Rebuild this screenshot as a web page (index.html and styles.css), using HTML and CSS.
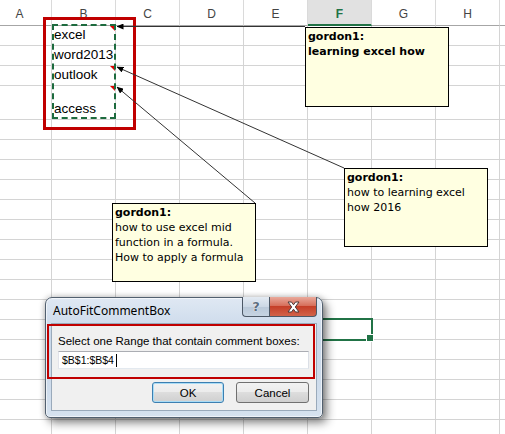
FILE: index.html
```html
<!DOCTYPE html>
<html lang="en">
<head>
    <meta charset="UTF-8">
    <title>AutoFitCommentBox</title>
    <link rel="stylesheet" href="styles.css">
</head>
<body>
    <div class="page">
        <!-- worksheet grid, filled in by the script below -->
        <div class="sheet" id="sheet"></div>

        <!-- marks drawn over the sheet -->
        <div class="marquee"></div>
        <div class="mark mark-range"></div>
        <div class="selection"></div>

        <svg class="arrows" width="505" height="434" viewBox="0 0 505 434">
            <defs>
                <marker id="head" markerWidth="7" markerHeight="6" refX="6.5" refY="3" orient="auto" markerUnits="userSpaceOnUse">
                    <path d="M0,0 L7,3 L0,6 z" fill="#000"/>
                </marker>
            </defs>
            <line x1="305" y1="26.5" x2="117" y2="26.5" stroke="#333" marker-end="url(#head)"/>
            <line x1="344" y1="168" x2="117" y2="67" stroke="#333" marker-end="url(#head)"/>
            <line x1="255" y1="203" x2="117" y2="87" stroke="#333" marker-end="url(#head)"/>
        </svg>

        <div class="note note-1">
            <b>gordon1:</b><br>
            <b>learning excel how</b>
        </div>
        <div class="note note-2">
            <b>gordon1:</b><br>
            how to learning excel<br>
            how 2016
        </div>
        <div class="note note-3">
            <b>gordon1:</b><br>
            how to use excel mid<br>
            function in a formula.<br>
            How to apply a formula
        </div>

        <!-- the add-in dialog -->
        <div class="dialog">
            <div class="title-bar">
                <span class="title">AutoFitCommentBox</span>
                <div class="caption-buttons">
                    <span class="cap-btn help">?</span>
                    <span class="cap-btn close">
                        <svg width="13" height="12" viewBox="0 0 13 12">
                            <path d="M1,1 H4.5 L6.5,3.8 L8.5,1 H12 L8.3,6 L12,11 H8.5 L6.5,8.2 L4.5,11 H1 L4.7,6 Z" fill="#fff" stroke="#4a3a3a" stroke-width="1" stroke-linejoin="round"/>
                        </svg>
                    </span>
                </div>
            </div>
            <div class="client">
                <div class="prompt">Select one Range that contain comment boxes:</div>
                <div class="field">$B$1:$B$4<span class="caret"></span></div>
                <div class="actions">
                    <button class="btn default">OK</button>
                    <button class="btn">Cancel</button>
                </div>
            </div>
        </div>
        <div class="mark mark-form"></div>
    </div>

    <script>
        const sheet = document.getElementById('sheet');
        // last column is only a sliver at the window edge, so no letter
        const cols = ['A', 'B', 'C', 'D', 'E', 'F', 'G', 'H', ''];
        const values = { 1: 'excel', 2: 'word2013', 3: 'outlook', 4: 'access' };
        const noted = [1, 3, 4];

        cols.forEach(c => {
            const h = document.createElement('div');
            h.className = c === 'F' ? 'hdr active' : 'hdr';
            h.textContent = c;
            sheet.appendChild(h);
        });

        for (let r = 1; r <= 20; r++) {
            cols.forEach(c => {
                const cell = document.createElement('div');
                cell.className = 'cell';
                if (c === 'B' && values[r]) {
                    cell.textContent = values[r];
                    if (noted.includes(r)) cell.classList.add('noted');
                }
                sheet.appendChild(cell);
            });
        }
    </script>
</body>
</html>
```

FILE: styles.css
```css
* {
    box-sizing: border-box;
}

body {
    margin: 0;
    background: #fff;
    font-family: 'Liberation Sans', Arial, sans-serif;
}

.page {
    position: relative;
    width: 505px;
    height: 434px;
    overflow: hidden;
}

/* Sheet */
.sheet {
    display: grid;
    grid-template-columns: repeat(9, 64px);
    grid-template-rows: 26px 20px 20px 20px 34px;
    grid-auto-rows: 20px;
    margin-left: -12px;
}

.hdr {
    border-right: 1px solid #dadada;
    border-bottom: 1px solid #a6a6a6;
    padding-top: 4px;
    line-height: 21px;
    text-align: center;
    font-size: 12px;
    color: #444;
}

.hdr.active {
    background: #e1e1e1;
    border-bottom: 2px solid #217346;
    color: #217346;
    font-weight: bold;
}

.cell {
    position: relative;
    display: flex;
    align-items: flex-end;
    padding: 0 2px 2px;
    border-right: 1px solid #d4d4d4;
    border-bottom: 1px solid #d4d4d4;
    font-size: 13.5px;
    line-height: 16px;
    color: #000;
    white-space: nowrap;
}

/* red comment indicator */
.cell.noted::after {
    content: '';
    position: absolute;
    top: 0;
    right: 0;
    border-top: 5px solid #e00000;
    border-left: 5px solid transparent;
}

.marquee {
    position: absolute;
    left: 52px;
    top: 24px;
    width: 64px;
    height: 95px;
    border: 2px dashed #1d6b3e;
}

.mark {
    position: absolute;
    border: 3px solid #c00000;
}

.mark-range {
    left: 43px;
    top: 17px;
    width: 93px;
    height: 113px;
}

.mark-form {
    left: 47px;
    top: 324px;
    width: 268px;
    height: 55px;
    border-width: 2px;
}

.selection {
    position: absolute;
    left: 306px;
    top: 318px;
    width: 67px;
    height: 23px;
    border: 2px solid #217346;
}

.selection::after {
    content: '';
    position: absolute;
    right: -3px;
    bottom: -3px;
    width: 6px;
    height: 6px;
    background: #217346;
    border: 1px solid #fff;
}

.arrows {
    position: absolute;
    left: 0;
    top: 0;
}

/* Comment boxes */
.note {
    position: absolute;
    width: 144px;
    height: 80px;
    padding: 1px 2px 0;
    background: #ffffe1;
    border: 1px solid #000;
    font-family: 'DejaVu Sans', Tahoma, sans-serif;
    font-size: 11px;
    line-height: 15px;
    color: #000;
    white-space: nowrap;
}

.note-1 {
    left: 305px;
    top: 27px;
}

.note-2 {
    left: 344px;
    top: 168px;
    height: 79px;
}

.note-3 {
    left: 112px;
    top: 203px;
    height: 79px;
}

/* Dialog */
.dialog {
    position: absolute;
    left: 45px;
    top: 297px;
    width: 278px;
    height: 121px;
    display: flex;
    flex-direction: column;
    padding: 0 5px 6px;
    border: 1px solid #52606f;
    border-radius: 7px 7px 5px 5px;
    background: linear-gradient(#dfe8f3, #c9d8ea 30%, #cddbeb 70%, #d6e2ef);
    box-shadow: inset 0 0 0 1px rgba(255, 255, 255, 0.6), 4px 5px 10px rgba(0, 0, 0, 0.45), 0 0 6px rgba(0, 0, 0, 0.25);
}

.title-bar {
    height: 25px;
    display: flex;
    justify-content: space-between;
    align-items: flex-start;
}

.title {
    padding: 5px 0 0 2px;
    font-family: 'Noto Sans', sans-serif;
    font-size: 12px;
    line-height: 16px;
    color: #000;
}

.caption-buttons {
    display: flex;
    margin-top: -1px;
}

.cap-btn {
    height: 20px;
    display: flex;
    align-items: center;
    justify-content: center;
    border: 1px solid #4c5866;
    border-top: none;
}

.help {
    width: 27px;
    border-radius: 0 0 0 4px;
    border-right: none;
    background: linear-gradient(#e3eaf2, #ccd8e5 50%, #b9c8d8 50%, #c7d4e2);
    font-family: 'DejaVu Sans', sans-serif;
    font-weight: bold;
    font-size: 13px;
    color: #5d6e80;
    text-shadow: 0 0 1px #fff, 0 0 1px #fff;
}

.close {
    width: 48px;
    border-radius: 0 0 4px 0;
    background: linear-gradient(#e9a99b, #d7705c 45%, #c53f28 50%, #d2634a);
}

.client {
    flex: 1;
    padding: 10px 7px 0 6px;
    background: #f0f0f0;
    border: 1px solid #9aaabb;
    font-size: 11.5px;
    color: #000;
}

.prompt {
    line-height: 14px;
    white-space: nowrap;
}

.field {
    display: flex;
    align-items: center;
    height: 18px;
    margin-top: 3px;
    padding-left: 3px;
    background: #fff;
    border: 1px solid #abadb3;
    border-color: #abadb3 #dbdfe6 #e3e9ef #e2e3ea;
    font-size: 10.5px;
    line-height: 16px;
}

.caret {
    width: 1px;
    height: 13px;
    margin-left: 2px;
    background: #000;
}

.actions {
    display: flex;
    justify-content: flex-end;
    gap: 12px;
    margin-top: 13px;
}

.btn {
    width: 73px;
    height: 21px;
    padding: 0;
    border: 1px solid #707070;
    border-radius: 3px;
    background: linear-gradient(#f2f2f2, #ebebeb 50%, #dddddd 50%, #cfcfcf);
    font-family: 'Liberation Sans', Arial, sans-serif;
    font-size: 11.5px;
    color: #000;
}

.btn.default {
    width: 72px;
    border-color: #3c7fb1;
    box-shadow: inset 0 0 0 1px #a9dcf6;
}
```
